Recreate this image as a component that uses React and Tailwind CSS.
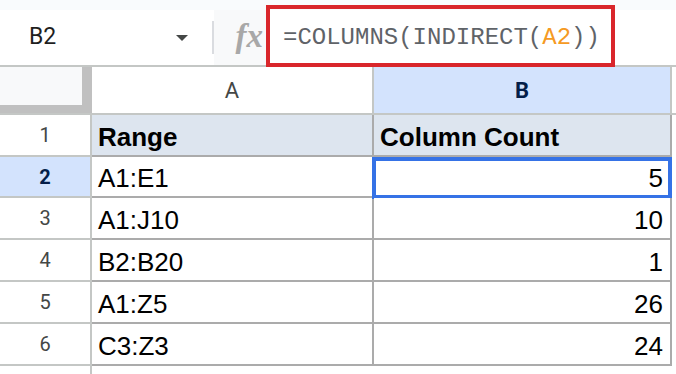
import React from 'react';

const rows = [
  { n: 1, a: 'Range', b: 'Column Count', head: true },
  { n: 2, a: 'A1:E1', b: '5', selected: true },
  { n: 3, a: 'A1:J10', b: '10' },
  { n: 4, a: 'B2:B20', b: '1' },
  { n: 5, a: 'A1:Z5', b: '26' },
  { n: 6, a: 'C3:Z3', b: '24' },
];

const uiFont = { fontFamily: 'Roboto, "Noto Sans", sans-serif' };
const cellFont = { fontFamily: '"Liberation Sans", Arial, sans-serif' };

function Row({ row }) {
  const height = row.n === 2 ? 'h-[41px]' : 'h-[42px]';
  return (
    <div className={`flex ${height}`}>
      <div
        className={`w-[92px] shrink-0 flex items-center justify-center border-r-2 border-b-2 border-[#c4c7c5] text-[20px] ${
          row.selected ? 'bg-[#d3e3fd] text-[#041e49] font-bold' : 'bg-white text-[#444746]'
        }`}
        style={uiFont}
      >
        {row.n}
      </div>
      <div
        className={`w-[282px] shrink-0 flex items-end pl-[6px] pb-[3px] border-r-2 border-b-2 border-[#ababab] text-[26px] leading-[30px] text-black ${
          row.head ? 'bg-[#dde5ef] font-bold' : 'bg-white'
        }`}
        style={cellFont}
      >
        {row.a}
      </div>
      <div
        className={`relative w-[298px] shrink-0 flex items-end pr-[7px] pb-[3px] border-r-2 border-b-2 border-[#ababab] text-[26px] leading-[30px] text-black ${
          row.head ? 'bg-[#dde5ef] font-bold justify-start pl-[6px]' : 'bg-white justify-end'
        }`}
        style={cellFont}
      >
        {row.b}
        {row.selected && (
          <div className="absolute -left-[2px] -right-[2px] top-0 -bottom-[3px] border-4 border-[#3572e6]" />
        )}
      </div>
    </div>
  );
}

export default function App() {
  return (
    <div className="relative w-[676px] h-[374px] overflow-hidden bg-white">
      {/* toolbar strip */}
      <div className="h-[10px] bg-[#f9fbfd]" />

      {/* name box + formula bar */}
      <div className="flex h-[55px]">
        <div className="w-[212px] shrink-0 flex items-center pl-[29px] pr-[24px] bg-white" style={uiFont}>
          <span className="text-[23px] text-[#1f1f1f]">B2</span>
          <span className="ml-auto w-0 h-0 border-l-[6px] border-r-[6px] border-t-[6px] border-l-transparent border-r-transparent border-t-[#444746]" />
        </div>
        <div className="w-[2px] h-[33px] self-center bg-[#dadce0]" />
        <div className="w-[52px] shrink-0 flex items-center justify-end pr-[3px] bg-[#f8f9fa]">
          <span
            className="text-[33px] italic font-bold text-[#a8a8a8] leading-none -mt-[2px]"
            style={{ fontFamily: '"Liberation Serif", "DejaVu Serif", serif' }}
          >
            fx
          </span>
        </div>
        <div
          className="flex-1 flex items-center pl-[17px] bg-white text-[24px] text-[#5f6368]"
          style={{ fontFamily: '"Liberation Mono", "DejaVu Sans Mono", monospace' }}
        >
          =COLUMNS(INDIRECT(<span className="text-[#f59a23]">A2</span>))
        </div>
      </div>
      <div className="h-[2px] bg-[#c4c7c5]" />

      {/* column headers */}
      <div className="flex h-[48px] border-b-2 border-[#c4c7c5]">
        <div className="w-[92px] shrink-0 bg-[#f8f9fa] border-r-[10px] border-b-[8px] border-[#c0c0c0]" />
        <div
          className="w-[282px] shrink-0 flex items-center justify-center border-r-2 border-[#c4c7c5] bg-white text-[22px] text-[#444746]"
          style={uiFont}
        >
          A
        </div>
        <div
          className="w-[298px] shrink-0 flex items-center justify-center border-r-2 border-[#c4c7c5] bg-[#d3e3fd] text-[22px] font-bold text-[#041e49]"
          style={uiFont}
        >
          B
        </div>
      </div>

      {rows.map((row) => (
        <Row key={row.n} row={row} />
      ))}

      {/* partial next row */}
      <div className="flex h-[10px]">
        <div className="w-[92px] shrink-0 border-r-2 border-[#c4c7c5]" />
      </div>

      {/* annotation around formula */}
      <div className="absolute left-[266px] top-[5px] w-[349px] h-[62px] border-4 border-[#d9262b]" />
    </div>
  );
}
